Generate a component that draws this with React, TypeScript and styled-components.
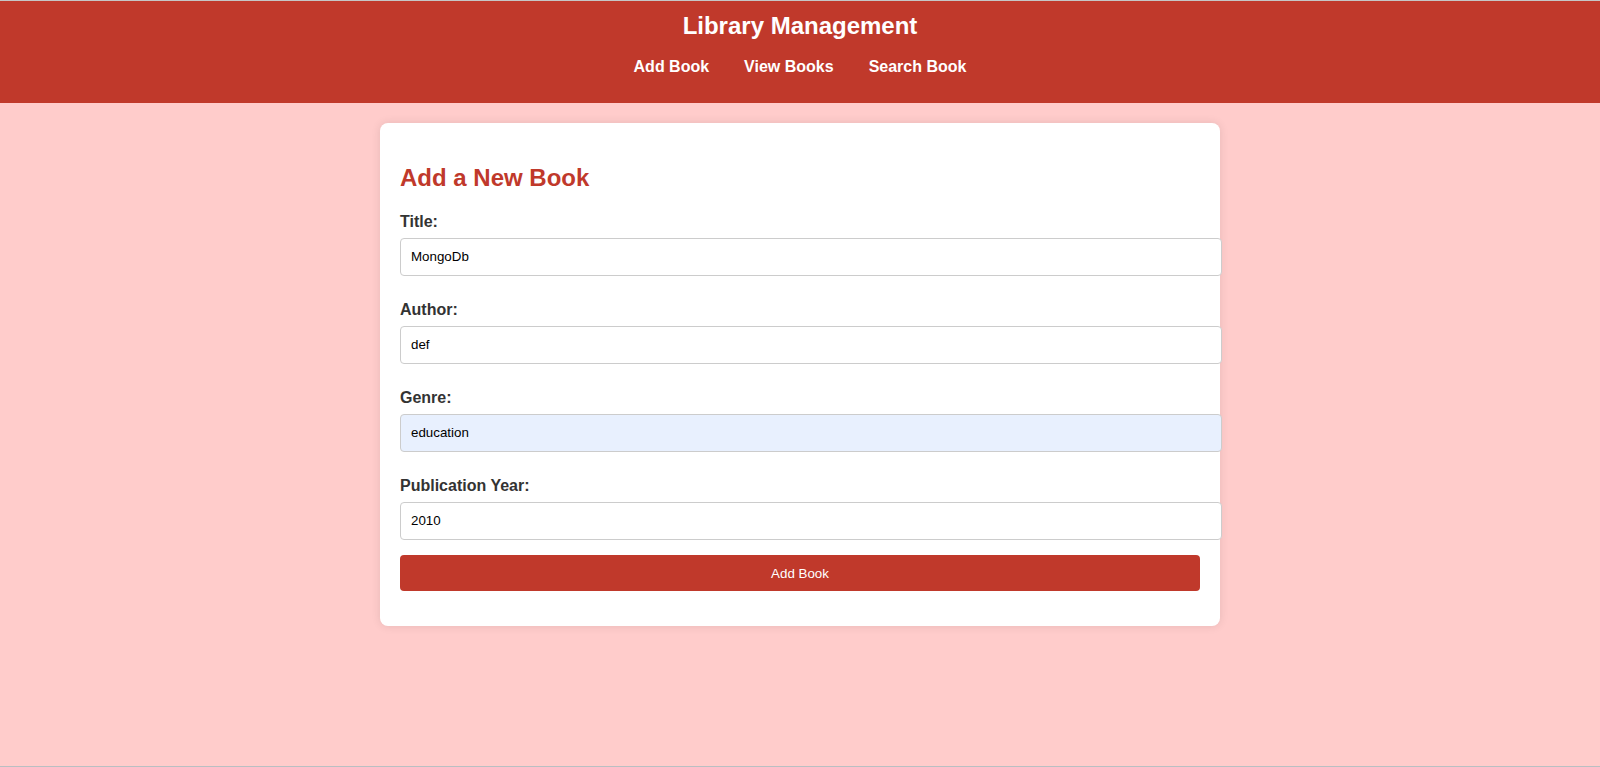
import React from "react";
import styled, { createGlobalStyle } from "styled-components";

const GlobalStyle = createGlobalStyle`
  html, body {
    margin: 0;
    padding: 0;
    background: #ffcccb;
    font-family: "Liberation Sans", Arial, sans-serif;
  }
`;

const Page = styled.div`
  min-height: 100vh;
  box-sizing: border-box;
  border-top: 1px solid #c6c6c6;
  border-bottom: 1px solid #b9bfc2;
  background: #ffcccb;
`;

const Header = styled.header`
  background: #c0392b;
  color: #fff;
  text-align: center;
  padding: 11px 0 27px;
`;

const SiteTitle = styled.h1`
  margin: 0 0 18px;
  font-size: 24px;
  font-weight: bold;
  line-height: normal;
`;

const Nav = styled.nav`
  display: flex;
  justify-content: center;
  gap: 35px;
`;

const NavLink = styled.a`
  color: #fff;
  text-decoration: none;
  font-size: 16px;
  font-weight: bold;
  line-height: normal;
  cursor: pointer;
`;

const Card = styled.main`
  width: 800px;
  margin: 20px auto 0;
  padding: 20px;
  background: #fff;
  border-radius: 8px;
  box-shadow: 0 0 10px rgba(0, 0, 0, 0.1);
`;

const Heading = styled.h2`
  margin: 21px 0 11px;
  color: #c0392b;
  font-size: 24px;
  font-weight: bold;
  line-height: normal;
`;

const Form = styled.form`
  display: flex;
  flex-direction: column;
`;

const Field = styled.div`
  display: flex;
  flex-direction: column;
  margin-bottom: 15px;
`;

const Label = styled.label`
  display: block;
  margin: 10px 0 7px;
  font-size: 16px;
  font-weight: bold;
  color: #333;
  line-height: normal;
`;

const Input = styled.input<{ $autofill?: boolean }>`
  display: block;
  width: 100%;
  box-sizing: content-box;
  margin: 0;
  padding: 10px;
  height: 16px;
  line-height: 16px;
  border: 1px solid #ccc;
  border-radius: 4px;
  font-family: "Liberation Sans", Arial, sans-serif;
  font-size: 13.333px;
  color: #000;
  background: ${(p) => (p.$autofill ? "#e8f0fe" : "#fff")};
  outline: none;
`;

const SubmitButton = styled.button`
  display: block;
  width: 100%;
  height: 36px;
  margin: 0 0 15px;
  padding: 10px;
  border: none;
  border-radius: 4px;
  background: #c0392b;
  color: #fff;
  font-family: "Liberation Sans", Arial, sans-serif;
  font-size: 13.333px;
  cursor: pointer;
`;

const fields = [
  { id: "title", label: "Title:", value: "MongoDb" },
  { id: "author", label: "Author:", value: "def" },
  { id: "genre", label: "Genre:", value: "education", autofill: true },
  { id: "year", label: "Publication Year:", value: "2010" },
];

export default function App() {
  return (
    <Page>
      <GlobalStyle />
      <Header>
        <SiteTitle>Library Management</SiteTitle>
        <Nav>
          <NavLink>Add Book</NavLink>
          <NavLink>View Books</NavLink>
          <NavLink>Search Book</NavLink>
        </Nav>
      </Header>
      <Card>
        <Heading>Add a New Book</Heading>
        <Form onSubmit={(e) => e.preventDefault()}>
          {fields.map((f) => (
            <Field key={f.id}>
              <Label htmlFor={f.id}>{f.label}</Label>
              <Input id={f.id} defaultValue={f.value} $autofill={f.autofill} />
            </Field>
          ))}
          <SubmitButton type="submit">Add Book</SubmitButton>
        </Form>
      </Card>
    </Page>
  );
}
